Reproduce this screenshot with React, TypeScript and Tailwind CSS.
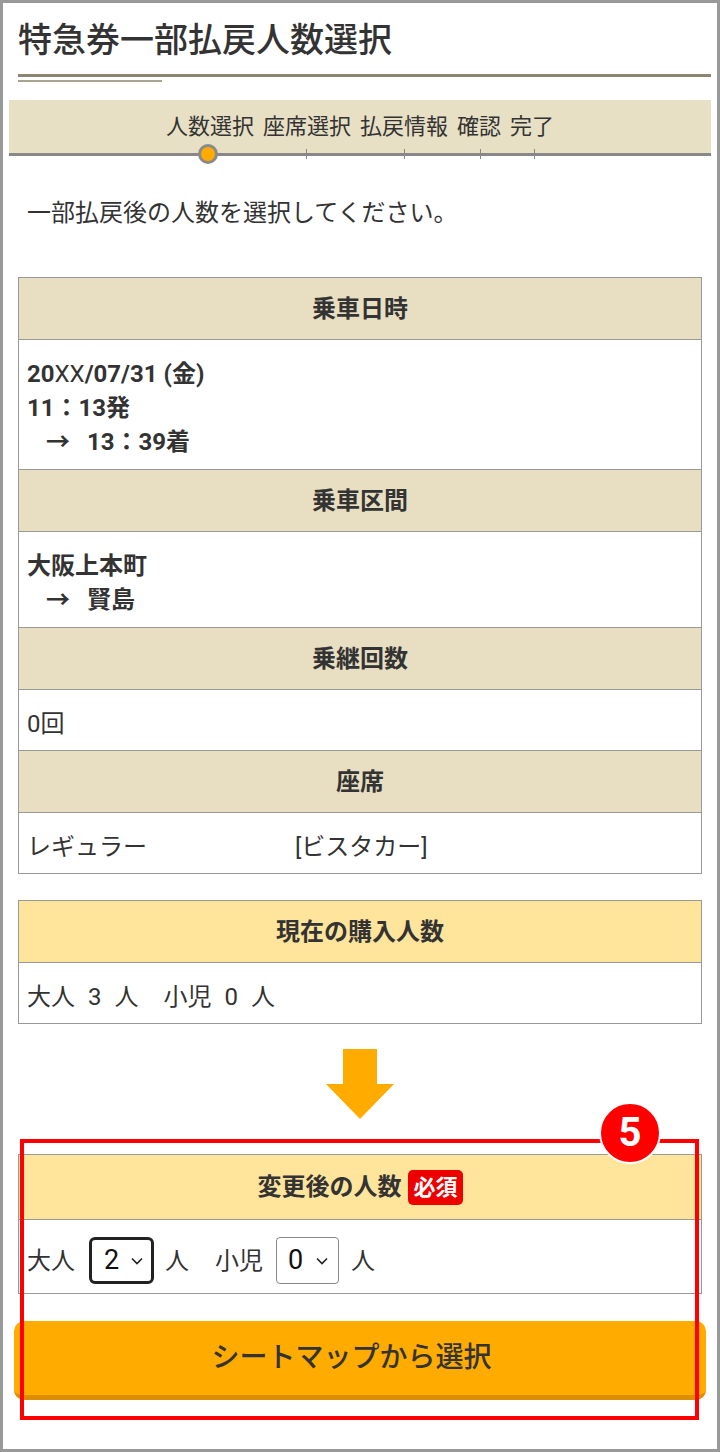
import React from "react";

const steps = ["人数選択", "座席選択", "払戻情報", "確認", "完了"];

const Head = ({ children, yellow = false, first = false }: { children: React.ReactNode; yellow?: boolean; first?: boolean }) => (
  <div
    className={`flex items-center justify-center text-[24px] font-bold text-[#333] ${
      yellow ? "bg-[#ffe49b]" : "bg-[#e8dfc3]"
    } ${first ? "h-[61px]" : "h-[62px] border-t border-[#999]"}`}
  >
    {children}
  </div>
);

const Body = ({ children, bold = false, short = false }: { children: React.ReactNode; bold?: boolean; short?: boolean }) => (
  <div
    className={`border-t border-[#999] pl-[8px] pt-[17px] text-[24px] leading-[34px] text-[#333] ${
      bold ? "font-bold" : ""
    } ${short ? "pb-[9px]" : "pb-[10px]"}`}
  >
    {children}
  </div>
);

const Arrow = () => <span className="inline-block w-[60px] pl-[19px]">→</span>;

const Sel = ({ value, focused = false }: { value: string; focused?: boolean }) => (
  <div className="relative">
    <select
      defaultValue={value}
      className={`h-[47px] appearance-none bg-white text-[27px] leading-none text-[#111] outline-none ${
        focused
          ? "w-[65px] rounded-[6px] border-[3px] border-[#222] pl-[12px]"
          : "w-[63px] rounded-[4px] border border-[#888] pl-[11px]"
      }`}
    >
      {["0", "1", "2", "3", "4", "5", "6", "7", "8", "9"].map((n) => (
        <option key={n} value={n}>
          {n}
        </option>
      ))}
    </select>
    <svg
      className="pointer-events-none absolute right-[11px] top-[20px]"
      width="12"
      height="8"
      viewBox="0 0 12 8"
      fill="none"
      stroke="#222"
      strokeWidth="1.6"
    >
      <path d="M1 1.5l5 5 5-5" />
    </svg>
  </div>
);

export default function App() {
  return (
    <div className="relative mx-auto h-[1452px] w-[720px] overflow-hidden border-[3px] border-[#999] bg-white font-[Roboto,'Noto_Sans_CJK_JP',sans-serif] text-[#333]">
      {/* title */}
      <div className="pl-[15px] pr-[6px] pt-[17px]">
        <h1 className="text-[34px] font-medium leading-[40px]">特急券一部払戻人数選択</h1>
        <div className="mt-[14px] h-[3px] bg-[#8c8572]" />
        <div className="mt-[3px] h-[2px] w-[144px] bg-[#a9a38f]" />
      </div>

      {/* steps */}
      <div className="relative mx-[6px] mt-[18px] border-b-[3px] border-[#888] bg-[#e8e0c5]">
        <div className="flex h-[53px] items-center justify-center gap-[9px] text-[22px]">
          {steps.map((s) => (
            <span key={s}>{s}</span>
          ))}
        </div>
        <span className="absolute left-[189px] top-[44px] h-[20px] w-[20px] rounded-full border-[3px] border-[#8a8a8a] bg-[#ffab00]" />
        <span className="absolute left-[297px] top-[49px] h-[10px] w-px bg-[#888]" />
        <span className="absolute left-[395px] top-[49px] h-[10px] w-px bg-[#888]" />
        <span className="absolute left-[471px] top-[49px] h-[10px] w-px bg-[#888]" />
        <span className="absolute left-[525px] top-[49px] h-[10px] w-px bg-[#888]" />
      </div>

      <p className="mt-[39px] pl-[24px] text-[24px] leading-[36px]">一部払戻後の人数を選択してください。</p>

      {/* ride info */}
      <div className="mx-[15px] mt-[46px] border border-[#999]">
        <Head first>乗車日時</Head>
        <Body bold>
          <div>
            20<span className="font-normal">XX</span>/07/31 (金)
          </div>
          <div>11：13発</div>
          <div>
            <Arrow />
            13：39着
          </div>
        </Body>
        <Head>乗車区間</Head>
        <Body bold>
          <div>大阪上本町</div>
          <div>
            <Arrow />
            賢島
          </div>
        </Body>
        <Head>乗継回数</Head>
        <Body short>0回</Body>
        <Head>座席</Head>
        <Body short>
          <div className="flex">
            <span className="w-[268px]">レギュラー</span>
            <span>[ビスタカー]</span>
          </div>
        </Body>
      </div>

      {/* current count */}
      <div className="mx-[15px] mt-[26px] border border-[#999]">
        <Head yellow first>
          現在の購入人数
        </Head>
        <Body short>
          <div className="flex">
            <span>大人</span>
            <span className="ml-[13px]">3</span>
            <span className="ml-[13px]">人</span>
            <span className="ml-[25px]">小児</span>
            <span className="ml-[13px]">0</span>
            <span className="ml-[13px]">人</span>
          </div>
        </Body>
      </div>

      <div className="mt-[25px] flex justify-center">
        <svg width="68" height="70" viewBox="0 0 68 70">
          <polygon points="17,0 51,0 51,35 68,35 34,70 0,35 17,35" fill="#ffab00" />
        </svg>
      </div>

      {/* new count */}
      <div className="mx-[15px] mt-[35px] border border-[#999]">
        <div className="flex h-[64px] items-center justify-center bg-[#ffe49b] text-[24px] font-bold">
          変更後の人数
          <span className="ml-[7px] rounded-[5px] bg-[#ee0000] px-[5px] text-[22px] leading-[35px] text-white">必須</span>
        </div>
        <div className="flex items-center border-t border-[#999] pb-[9px] pl-[8px] pt-[17px] text-[24px]">
          <span>大人</span>
          <span className="ml-[14px]">
            <Sel value="2" focused />
          </span>
          <span className="ml-[11px]">人</span>
          <span className="ml-[26px]">小児</span>
          <span className="ml-[13px]">
            <Sel value="0" />
          </span>
          <span className="ml-[12px]">人</span>
        </div>
      </div>

      <button className="mx-[11px] mt-[27px] flex h-[79px] w-[692px] items-center justify-center rounded-[10px] border-b-[5px] border-[#dc8e00] bg-[#ffab00] pr-[17px] text-[28px] font-medium text-[#333]">
        シートマップから選択
      </button>

      {/* annotation */}
      <div className="pointer-events-none absolute left-[17px] top-[1136px] h-[281px] w-[679px] border-4 border-[#ff0000]" />
      <div className="absolute left-[596px] top-[1099px] flex h-[62px] w-[62px] items-center justify-center rounded-full border-2 border-white bg-[#ff0000] font-[Roboto,sans-serif] text-[40px] font-bold text-white">
        5
      </div>
    </div>
  );
}
